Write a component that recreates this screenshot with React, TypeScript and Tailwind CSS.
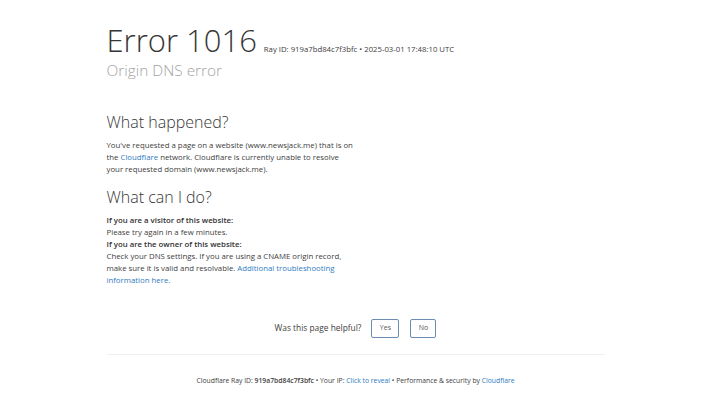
import React from "react";

export default function App() {
  return (
    <div
      className="min-h-screen w-full bg-white text-[#404040]"
      style={{ fontFamily: '"Open Sans", "Liberation Sans", sans-serif' }}
    >
      <div className="mx-auto w-[498px] pt-[21px]">
        <header>
          <div className="flex items-baseline gap-[7px]">
            <h1 className="text-[31px] font-light leading-[38px] text-[#363636]">Error 1016</h1>
            <span className="text-[7.75px] text-[#404040]">
              Ray ID: 919a7bd84c7f3bfc • 2025-03-01 17:48:10 UTC
            </span>
          </div>
          <h2 className="mt-[2px] text-[15.4px] font-light leading-[20px] text-[#a3a3a3]">
            Origin DNS error
          </h2>
        </header>

        <section className="mt-[30px] w-[250px]">
          <h2 className="text-[16px] font-light leading-[22px] text-[#363636]">What happened?</h2>
          <p className="mt-[6px] text-[7.8px] leading-[12px]">
            You've requested a page on a website (www.newsjack.me) that is on the{" "}
            <a className="text-[#2f7bbf]">Cloudflare</a> network. Cloudflare is currently unable to
            resolve your requested domain (www.newsjack.me).
          </p>
        </section>

        <section className="mt-[11px] w-[250px]">
          <h2 className="text-[16px] font-light leading-[22px] text-[#363636]">What can I do?</h2>
          <div className="mt-[6px] text-[7.8px] leading-[12px]">
            <p className="font-semibold text-[#313131]">If you are a visitor of this website:</p>
            <p>Please try again in a few minutes.</p>
            <p className="font-semibold text-[#313131]">If you are the owner of this website:</p>
            <p>
              Check your DNS settings. If you are using a CNAME origin record, make sure it is valid
              and resolvable. <a className="text-[#2f7bbf]">Additional troubleshooting information here.</a>
            </p>
          </div>
        </section>

        <div className="mt-[33px] flex items-center justify-center text-[8.4px]">
          <span className="mr-[10px]">Was this page helpful?</span>
          <button className="mr-[11px] h-[19px] w-[28px] rounded-[2px] border border-[#6b8db3] text-[7px] text-[#555]">
            Yes
          </button>
          <button className="h-[19px] w-[26px] rounded-[2px] border border-[#6b8db3] text-[7px] text-[#555]">
            No
          </button>
        </div>

        <div className="mt-[16px] border-t border-[#efefef] pt-[21px] text-center text-[6.8px] leading-[10px]">
          Cloudflare Ray ID: <strong className="font-semibold">919a7bd84c7f3bfc</strong> • Your IP:{" "}
          <a className="text-[#2f7bbf]">Click to reveal</a> • Performance &amp; security by{" "}
          <a className="text-[#2f7bbf]">Cloudflare</a>
        </div>
      </div>
    </div>
  );
}
